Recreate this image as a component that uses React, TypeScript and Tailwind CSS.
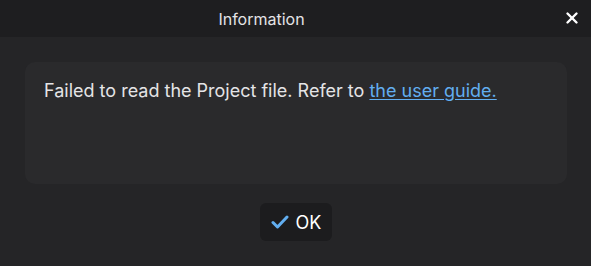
import { X } from 'lucide-react';

export default function App() {
    return (
        <div className="w-[591px] h-[266px] flex flex-col bg-[#252527] font-['Inter','Noto_Sans',sans-serif] text-[#e4e4e6]">
            {/* Title bar */}
            <div className="relative h-[37px] flex items-center justify-center pr-[68px] bg-[#1e1e20]">
                <span className="text-[16px]">Information</span>
                <button className="absolute right-[10px] top-[9px] text-white">
                    <X size={18} strokeWidth={3.2} />
                </button>
            </div>

            {/* Message */}
            <div className="flex-1 flex flex-col items-center pt-[25px] pr-[24px] pl-[25px]">
                <div className="w-full h-[122px] rounded-[10px] bg-[#2a2a2c] px-[19px] pt-[17px]">
                    <p className="text-[18px] leading-[24px]">
                        Failed to read the Project file. Refer to{' '}
                        <a href="#" className="text-[#62aef0] underline underline-offset-2">the user guide.</a>
                    </p>
                </div>

                <button className="mt-[19px] h-[38px] w-[72px] flex items-center justify-center gap-[7px] rounded-[6px] bg-[#1c1c1e] text-[18px] text-white">
                    <svg width="18" height="14" viewBox="0 0 18 14" fill="none">
                        <path d="M2 7.5 L6.5 12 L16 2" stroke="#62aef0" strokeWidth="3" strokeLinecap="round" strokeLinejoin="round" />
                    </svg>
                    OK
                </button>
            </div>
        </div>
    );
}
